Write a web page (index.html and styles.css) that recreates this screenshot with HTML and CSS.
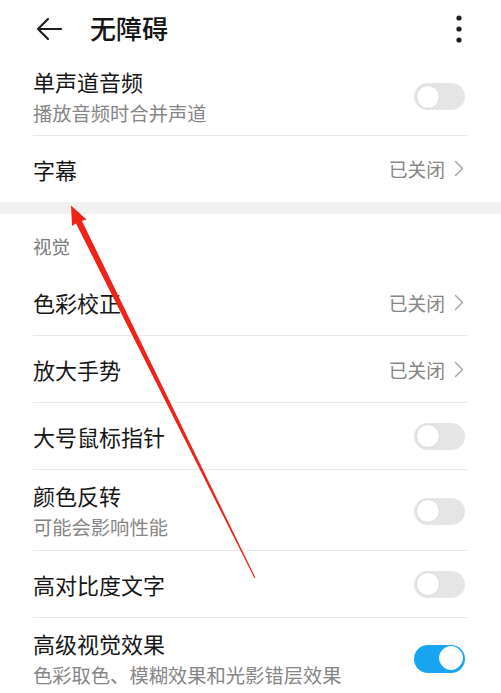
FILE: index.html
```html
<!DOCTYPE html>
<html lang="zh-CN">
<head>
<meta charset="utf-8">
<title>无障碍</title>
<link rel="stylesheet" href="styles.css">
</head>
<body>
<div class="page">
  <header class="topbar">
    <svg class="back" width="28" height="24" viewBox="0 0 28 24">
      <path d="M26 12H3M13 2L3 12l10 10" fill="none" stroke="#1f1f1f" stroke-width="2.2" stroke-linecap="round" stroke-linejoin="round"/>
    </svg>
    <h1 class="title">无障碍</h1>
    <svg class="more" width="8" height="28" viewBox="0 0 8 28">
      <circle cx="4" cy="3" r="2.6" fill="#1f1f1f"/>
      <circle cx="4" cy="14" r="2.6" fill="#1f1f1f"/>
      <circle cx="4" cy="25" r="2.6" fill="#1f1f1f"/>
    </svg>
  </header>

  <section class="group">
    <div class="row row-two first">
      <div class="texts">
        <div class="label">单声道音频</div>
        <div class="sub">播放音频时合并声道</div>
      </div>
      <span class="switch"></span>
    </div>
    <div class="row last">
      <div class="label">字幕</div>
      <div class="value">已关闭<svg class="chev" width="10" height="17" viewBox="0 0 10 17"><path d="M1.5 1.5l7 7-7 7" fill="none" stroke="#a8a8a8" stroke-width="1.5" stroke-linecap="round" stroke-linejoin="round"/></svg></div>
    </div>
  </section>

  <div class="band"></div>

  <section class="group">
    <div class="group-title">视觉</div>
    <div class="row">
      <div class="label">色彩校正</div>
      <div class="value">已关闭<svg class="chev" width="10" height="17" viewBox="0 0 10 17"><path d="M1.5 1.5l7 7-7 7" fill="none" stroke="#a8a8a8" stroke-width="1.5" stroke-linecap="round" stroke-linejoin="round"/></svg></div>
    </div>
    <div class="row">
      <div class="label">放大手势</div>
      <div class="value">已关闭<svg class="chev" width="10" height="17" viewBox="0 0 10 17"><path d="M1.5 1.5l7 7-7 7" fill="none" stroke="#a8a8a8" stroke-width="1.5" stroke-linecap="round" stroke-linejoin="round"/></svg></div>
    </div>
    <div class="row">
      <div class="label">大号鼠标指针</div>
      <span class="switch"></span>
    </div>
    <div class="row row-two">
      <div class="texts">
        <div class="label">颜色反转</div>
        <div class="sub">可能会影响性能</div>
      </div>
      <span class="switch"></span>
    </div>
    <div class="row">
      <div class="label">高对比度文字</div>
      <span class="switch"></span>
    </div>
    <div class="row row-two">
      <div class="texts">
        <div class="label">高级视觉效果</div>
        <div class="sub">色彩取色、模糊效果和光影错层效果</div>
      </div>
      <span class="switch on"></span>
    </div>
  </section>

  <svg class="annotation" width="501" height="693" viewBox="0 0 501 693">
    <polygon points="71,205.5 86.5,219.5 82,221 255.5,577.8 254.5,578.2 76,223.5 72,226" fill="#ee2419"/>
  </svg>
</div>
</body>
</html>
```

FILE: styles.css
```css
html, body {
  margin: 0;
  padding: 0;
  background: #ffffff;
}

body {
  font-family: "Noto Sans CJK SC", "Noto Sans", sans-serif;
  color: #161616;
}

.page {
  position: relative;
  width: 501px;
  height: 693px;
  overflow: hidden;
}

.topbar {
  height: 56px;
  display: flex;
  align-items: center;
  padding: 0 38px 0 35px;
  box-sizing: border-box;
}

.back {
  display: block;
  margin-top: 2px;
}

.title {
  margin: 0 0 0 27px;
  font-size: 26px;
  font-weight: 500;
  line-height: 34px;
  flex: 1;
  color: #161616;
}

.more {
  display: block;
  margin-top: 1px;
}

.group {
  padding: 0 34px 0 33px;
}

.row {
  height: 67px;
  box-sizing: border-box;
  display: flex;
  align-items: center;
  justify-content: space-between;
  border-bottom: 1px solid #e8e8e8;
}

.row.last {
  border-bottom: none;
  height: 66px;
  padding-bottom: 1px;
}

.row-two {
  height: 81px;
  padding-top: 2px;
}

.row-two.first {
  height: 80px;
}

.texts {
  display: flex;
  flex-direction: column;
}

.label {
  font-size: 22px;
  line-height: 32px;
  color: #161616;
}

.sub {
  font-size: 19.3px;
  line-height: 32px;
  color: #858585;
}

.value {
  display: flex;
  align-items: center;
  gap: 9px;
  font-size: 18.8px;
  color: #858585;
  margin-right: 3px;
}

.chev {
  display: block;
}

.switch {
  width: 51px;
  height: 27px;
  border-radius: 14px;
  background: #e5e5e5;
  position: relative;
  flex: none;
  margin-right: 2px;
}

.switch::after {
  content: "";
  position: absolute;
  left: 2px;
  top: 1.5px;
  width: 22px;
  height: 22px;
  border-radius: 50%;
  background: #ffffff;
  border: 1px solid #d8d8d8;
}

.switch.on {
  background: #18a6f2;
  height: 28px;
}

.switch.on::after {
  left: auto;
  right: 2px;
  top: 1px;
  border: 1px solid #ffffff;
  background: #ffffff;
}

.band {
  height: 12px;
  background: #f1f1f1;
}

.group-title {
  height: 55px;
  box-sizing: border-box;
  padding-top: 16px;
  font-size: 18.5px;
  line-height: 32px;
  color: #7a7a7a;
}

.annotation {
  position: absolute;
  left: 0;
  top: 0;
  pointer-events: none;
}
```
